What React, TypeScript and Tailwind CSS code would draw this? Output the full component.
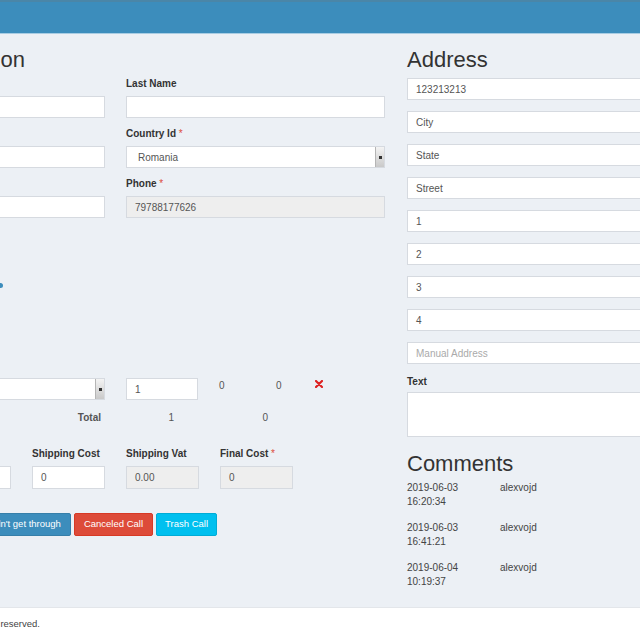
import React from "react";

const font = { fontFamily: '"Liberation Sans", Arial, sans-serif' };

function Box({ children, className = "", disabled = false, muted = false }: { children?: React.ReactNode; className?: string; disabled?: boolean; muted?: boolean }) {
  return (
    <div
      className={`h-[22px] border border-[#d6dae0] flex items-center px-[8px] text-[10px] whitespace-nowrap ${disabled ? "bg-[#eeeeee]" : "bg-white"} ${muted ? "text-[#aaaaaa]" : "text-[#555555]"} ${className}`}
    >
      {children}
    </div>
  );
}

function Arrow() {
  return (
    <div className="w-[9px] self-stretch bg-gradient-to-b from-[#f4f4f4] to-[#c9c9c9] border-l border-[#b5b5b5] flex items-center justify-center">
      <div className="w-[3px] h-[3px] bg-[#333]" />
    </div>
  );
}

function Select({ children }: { children?: React.ReactNode }) {
  return (
    <div className="h-[22px] border border-[#d6dae0] bg-white flex items-stretch text-[10px] text-[#555]">
      <div className="flex-1 flex items-center pl-[11px]">{children}</div>
      <Arrow />
    </div>
  );
}

function Label({ children, req = false }: { children?: React.ReactNode; req?: boolean }) {
  return (
    <div className="h-[12px] leading-[12px] text-[10px] font-bold text-[#333] mb-[6px] whitespace-nowrap">
      {children}
      {req && <span className="text-[#dd4b39] font-normal"> *</span>}
    </div>
  );
}

export default function App() {
  return (
    <div style={font} className="w-[640px] h-[640px] overflow-hidden bg-[#ecf0f5] flex flex-col">
      <div className="h-[34px] shrink-0 bg-[#3c8dbc] border-t-2 border-[#4a86a8] border-b border-b-[#a9cde3]" />
      <div className="h-[573px] shrink-0 flex gap-[22px]">
        {/* left column */}
        <div className="w-[539px] shrink-0 ml-[-154px] flex flex-col">
          <div className="w-[179px] flex justify-end pt-[13px] h-[39px] mb-[5px]">
            <div className="text-[22px] leading-[26px] text-[#333] whitespace-nowrap">Client Information</div>
          </div>
          <div className="grid grid-cols-2 gap-x-[21px] gap-y-[10px]">
            <div>
              <Label />
              <Box />
            </div>
            <div>
              <Label>Last Name</Label>
              <Box />
            </div>
            <div>
              <Label />
              <Box />
            </div>
            <div>
              <Label req>Country Id</Label>
              <Select>Romania</Select>
            </div>
            <div>
              <Label />
              <Box />
            </div>
            <div>
              <Label req>Phone</Label>
              <Box disabled>79788177626</Box>
            </div>
          </div>
          <div className="mt-[65px] h-[10px] w-[157px] flex justify-end">
            <div className="w-[7px] h-[5px] rounded-full bg-[#3c8dbc]" />
          </div>
          {/* product row */}
          <div className="mt-[85px] flex items-start h-[22px]">
            <div className="w-[259px]">
              <Select />
            </div>
            <Box className="w-[72px] ml-[21px]">1</Box>
            <div className="ml-[21px] w-[57px] pt-[2px] text-[10px] text-[#555] leading-[12px]">0</div>
            <div className="w-[39px] pt-[2px] text-[10px] text-[#555] leading-[12px]">0</div>
            <svg width="8" height="8" viewBox="0 0 8 8" className="mt-[2px]">
              <path d="M1 1 L7 7 M7 1 L1 7" stroke="#dd2222" strokeWidth="2.2" strokeLinecap="round" />
            </svg>
          </div>
          {/* total row */}
          <div className="mt-[12px] flex h-[12px] leading-[12px] text-[10px] text-[#555]">
            <div className="w-[255px] text-right font-bold">Total</div>
            <div className="w-[73px] text-right">1</div>
            <div className="w-[94px] text-right">0</div>
          </div>
          {/* shipping */}
          <div className="mt-[24px] flex gap-[21px] ml-[-2px]">
            <div className="w-[73px]">
              <Label />
              <Box className="h-[23px]" />
            </div>
            <div className="w-[73px]">
              <Label />
              <Box className="h-[23px]" />
            </div>
            <div className="w-[73px]">
              <Label>Shipping Cost</Label>
              <Box className="h-[23px]">0</Box>
            </div>
            <div className="w-[73px]">
              <Label>Shipping Vat</Label>
              <Box className="h-[23px]" disabled>0.00</Box>
            </div>
            <div className="w-[73px]">
              <Label req>Final Cost</Label>
              <Box className="h-[23px]" disabled>0</Box>
            </div>
          </div>
          {/* buttons */}
          <div className="mt-[24px] w-[371px] flex justify-end gap-[3px]">
            <div className="h-[23px] px-[9px] flex items-center bg-[#3c8dbc] border border-[#367fa9] rounded-[2px] text-white text-[9.5px] whitespace-nowrap">Didn&apos;t get through</div>
            <div className="h-[23px] px-[9px] flex items-center bg-[#dd4b39] border border-[#d73925] rounded-[2px] text-white text-[9.5px] whitespace-nowrap">Canceled Call</div>
            <div className="h-[23px] px-[8px] flex items-center bg-[#00c0ef] border border-[#00acd6] rounded-[2px] text-white text-[9.5px] whitespace-nowrap">Trash Call</div>
          </div>
        </div>
        {/* right column */}
        <div className="w-[280px] shrink-0 flex flex-col">
          <div className="pt-[13px] h-[39px] mb-[5px] text-[22px] leading-[26px] text-[#333]">Address</div>
          <div className="flex flex-col gap-[11px]">
            <Box>123213213</Box>
            <Box>City</Box>
            <Box>State</Box>
            <Box>Street</Box>
            <Box>1</Box>
            <Box>2</Box>
            <Box>3</Box>
            <Box>4</Box>
            <Box muted>Manual Address</Box>
          </div>
          <div className="mt-[12px] h-[12px] leading-[12px] text-[10px] font-bold text-[#333] mb-[4px]">Text</div>
          <div className="h-[45px] bg-white border border-[#d6dae0]" />
          <div className="mt-[14px] text-[22px] leading-[26px] text-[#333]">Comments</div>
          <div className="mt-[4px] flex flex-col gap-[12px] text-[10px] leading-[14px] text-[#444]">
            {[
              ["2019-06-03", "16:20:34"],
              ["2019-06-03", "16:41:21"],
              ["2019-06-04", "10:19:37"],
            ].map(([d, t], i) => (
              <div key={i} className="flex">
                <div className="w-[93px]">
                  <div>{d}</div>
                  <div>{t}</div>
                </div>
                <div>alexvojd</div>
              </div>
            ))}
          </div>
        </div>
      </div>
      <div className="flex-1 bg-white border-t border-[#e3e6ea] flex items-center">
        <div className="w-[40px] flex justify-end shrink-0">
          <div className="text-[9.5px] text-[#444] whitespace-nowrap">Copyright © 2019. All rights reserved.</div>
        </div>
      </div>
    </div>
  );
}
